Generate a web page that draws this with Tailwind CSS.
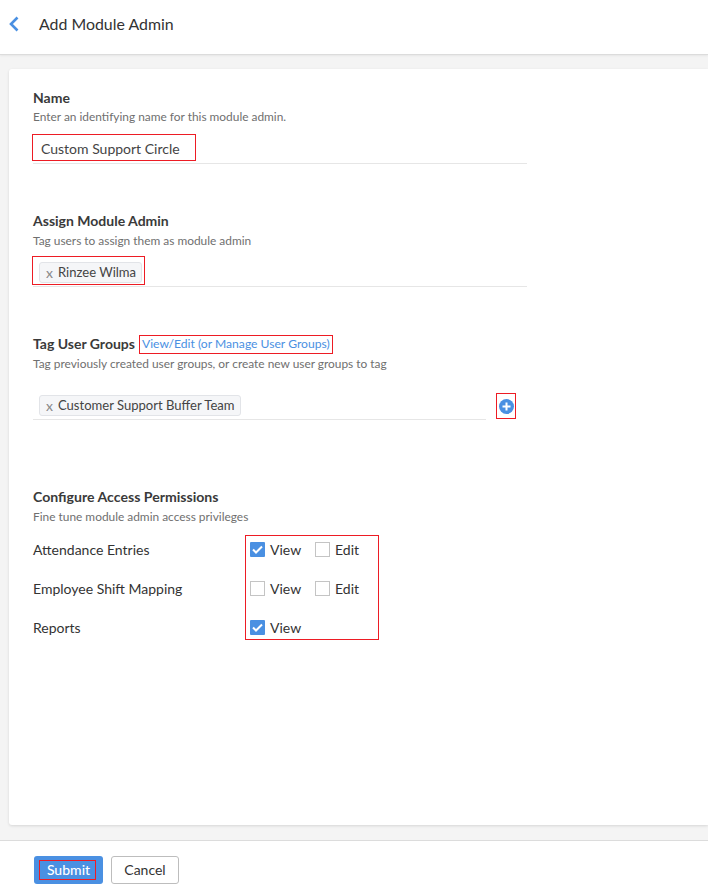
<!DOCTYPE html>
<html lang="en">
<head>
    <meta charset="UTF-8">
    <title>Add Module Admin</title>
    <script src="https://cdn.jsdelivr.net/npm/@tailwindcss/browser@4"></script>
</head>
<body class="bg-[#f4f4f4] font-['Lato',sans-serif] text-[#333] w-[708px] h-[893px] overflow-hidden flex flex-col">
    <!-- Header -->
    <div class="h-[55px] shrink-0 bg-white border-b border-[#dcdcdc] shadow-[0_1px_2px_rgba(0,0,0,0.06)] flex items-center pb-[6px]">
        <svg class="ml-[8px] w-[12px] h-[16px]" viewBox="0 0 12 16" fill="none" stroke="#4a90e2" stroke-width="2.6"><path d="M9.5 1.5 3 8l6.5 6.5"/></svg>
        <div class="ml-[19px] text-[15.9px] leading-[20px] text-[#333]">Add Module Admin</div>
    </div>

    <!-- Form card -->
    <div class="mt-[14px] ml-[9px] h-[756px] shrink-0 bg-white rounded-tl-[3px] rounded-bl-[3px] shadow-[0_1px_3px_rgba(0,0,0,0.12)] pl-[24px] pt-[20px]">
        <div class="text-[14px] leading-[18px] font-bold text-[#3a3a3a]">Name</div>
        <div class="text-[11.9px] leading-[16px] text-[#6f6f6f] mt-[2px]">Enter an identifying name for this module admin.</div>
        <div class="relative w-[494px] h-[30px] mt-[9px] border-b border-[#e6e6e6] flex items-center pl-[8px] text-[14px] text-[#444]">
            <span>Custom Support Circle</span>
            <div class="absolute left-[-1px] top-0 w-[164px] h-[27px] border border-[#ed1c24]"></div>
        </div>

        <div class="text-[14px] leading-[18px] font-bold text-[#3a3a3a] mt-[48px]">Assign Module Admin</div>
        <div class="text-[11.9px] leading-[16px] text-[#6f6f6f] mt-[3px]">Tag users to assign them as module admin</div>
        <div class="relative w-[494px] h-[31px] mt-[7px] border-b border-[#e6e6e6] pl-[6px] pt-[6px]">
            <div class="flex w-fit items-center h-[21px] pl-[6px] pr-[5px] bg-[#f5f6f8] border border-[#e2e4e8] rounded-[3px] text-[13.05px] text-[#444]">
                <span class="text-[14px] text-[#888] mr-[5px]">x</span>Rinzee Wilma
            </div>
            <div class="absolute left-[-1px] top-0 w-[113px] h-[29px] border border-[#ed1c24]"></div>
        </div>

        <div class="flex items-center mt-[48px] h-[18px]">
            <div class="text-[14px] leading-[18px] font-bold text-[#3a3a3a]">Tag User Groups</div>
            <a class="relative ml-[4px] px-[3px] text-[12.13px] leading-[18px] text-[#4a90e2]">View/Edit (or Manage User Groups)
                <span class="absolute inset-x-0 top-[0px] h-[19px] border border-[#ed1c24]"></span>
            </a>
        </div>
        <div class="text-[11.9px] leading-[16px] text-[#6f6f6f] mt-[3px]">Tag previously created user groups, or create new user groups to tag</div>
        <div class="flex items-end mt-[13px]">
            <div class="w-[453px] h-[35px] border-b border-[#e6e6e6] pl-[6px] pt-[10px]">
                <div class="flex w-fit items-center h-[21px] pl-[6px] pr-[5px] bg-[#f5f6f8] border border-[#e2e4e8] rounded-[3px] text-[13.05px] text-[#444]">
                    <span class="text-[14px] text-[#888] mr-[5px]">x</span>Customer Support Buffer Team
                </div>
            </div>
            <div class="ml-[10px] mb-[1px] w-[20px] h-[26px] border border-[#ed1c24] flex items-center justify-center">
                <svg class="w-[15px] h-[15px] mt-[1px]" viewBox="0 0 15 15"><circle cx="7.5" cy="7.5" r="7.5" fill="#4a90e2"/><path d="M7.5 3.5v8M3.5 7.5h8" stroke="#fff" stroke-width="2"/></svg>
            </div>
        </div>

        <div class="text-[14.1px] leading-[18px] font-bold text-[#3a3a3a] mt-[68px]">Configure Access Permissions</div>
        <div class="text-[11.9px] leading-[16px] text-[#6f6f6f] mt-[3px]">Fine tune module admin access privileges</div>

        <div class="relative mt-[5px] w-[347px]">
            <div class="flex items-center h-[39px] text-[14px] text-[#333]">
                <div class="w-[217px]">Attendance Entries</div>
                <svg class="w-[15px] h-[15px]" viewBox="0 0 15 15"><rect width="15" height="15" rx="1" fill="#4a90e2"/><path d="M3 7.5l3 3 6-6" fill="none" stroke="#fff" stroke-width="2"/></svg>
                <div class="ml-[5px] w-[45px]">View</div>
                <div class="w-[15px] h-[15px] border-[1.5px] border-[#c4c4c4]"></div>
                <div class="ml-[5px]">Edit</div>
            </div>
            <div class="flex items-center h-[39px] text-[14px] text-[#333]">
                <div class="w-[217px]">Employee Shift Mapping</div>
                <div class="w-[15px] h-[15px] border-[1.5px] border-[#c4c4c4]"></div>
                <div class="ml-[5px] w-[45px]">View</div>
                <div class="w-[15px] h-[15px] border-[1.5px] border-[#c4c4c4]"></div>
                <div class="ml-[5px]">Edit</div>
            </div>
            <div class="flex items-center h-[39px] text-[14px] text-[#333]">
                <div class="w-[217px]">Reports</div>
                <svg class="w-[15px] h-[15px]" viewBox="0 0 15 15"><rect width="15" height="15" rx="1" fill="#4a90e2"/><path d="M3 7.5l3 3 6-6" fill="none" stroke="#fff" stroke-width="2"/></svg>
                <div class="ml-[5px]">View</div>
            </div>
            <!-- red highlight round the checkboxes -->
            <div class="absolute left-[212px] top-[5px] w-[134px] h-[105px] border border-[#ed1c24]"></div>
        </div>
    </div>

    <!-- Footer -->
    <div class="mt-[15px] flex-1 bg-white border-t border-[#dcdcdc] flex items-start pl-[34px] pt-[15px]">
        <button class="relative w-[69px] h-[28px] pb-[1px] bg-[#4a90e2] rounded-[3px] text-[14px] text-white font-medium">Submit
            <span class="absolute left-[5px] top-[4px] w-[57px] h-[20px] border border-[#ed1c24]"></span>
        </button>
        <button class="ml-[8px] w-[68px] h-[28px] pb-[1px] bg-white border border-[#bdbdbd] rounded-[3px] text-[14px] text-[#333]">Cancel</button>
    </div>
</body>
</html>
